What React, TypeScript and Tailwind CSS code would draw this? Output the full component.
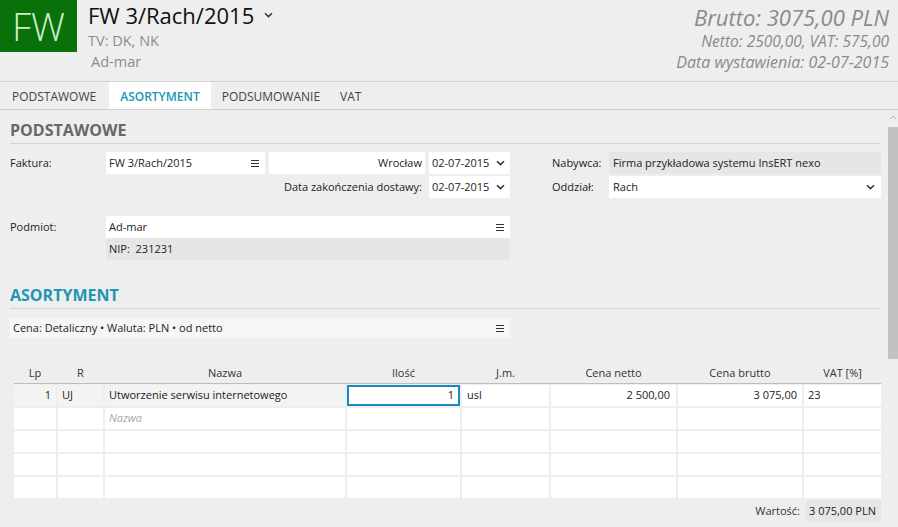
import React from "react";

const font = { fontFamily: '"Open Sans", "Noto Sans", sans-serif' };

function Chevron({ className = "" }: { className?: string }) {
  return (
    <svg width="9" height="6" viewBox="0 0 9 6" className={className}>
      <path d="M1 1.2 L4.5 4.6 L8 1.2" fill="none" stroke="currentColor" strokeWidth="1.5" />
    </svg>
  );
}

function Burger() {
  return (
    <svg width="8" height="7" viewBox="0 0 8 7">
      <path d="M0 0.5 H8 M0 3.5 H8 M0 6.5 H8" stroke="#333" strokeWidth="1" />
    </svg>
  );
}

function SectionTitle({ children, teal }: { children: React.ReactNode; teal?: boolean }) {
  return (
    <div
      className={`pt-[10px] pb-[3px] border-b border-[#d4d4d4] text-[16px] leading-[20px] font-bold ${
        teal ? "text-[#2196b4]" : "text-[#686868]"
      }`}
    >
      {children}
    </div>
  );
}

const cols = ["Lp", "R", "Nazwa", "Ilość", "J.m.", "Cena netto", "Cena brutto", "VAT [%]"];

export default function App() {
  const rows = [0, 1, 2, 3, 4];
  return (
    <div
      className="w-[898px] h-[527px] overflow-hidden bg-[#eeeeee] flex flex-col text-[#222] text-[11px]"
      style={font}
    >
      {/* header */}
      <div className="h-[82px] flex border-b border-[#d2d2d2] shrink-0">
        <div className="w-[77px] h-[52px] bg-[#0a700a] text-[#c9efc6] text-[38px] leading-[48px] flex items-center justify-center font-light">
          FW
        </div>
        <div className="ml-[11px] flex flex-col">
          <div className="flex items-center gap-[10px] text-[22px] leading-[26px] mt-[2px] text-[#111]">
            FW 3/Rach/2015
            <Chevron className="text-[#333]" />
          </div>
          <div className="text-[14.5px] leading-[20px] text-[#8c8c8c] mt-[3px]">TV: DK, NK</div>
          <div className="text-[14.5px] leading-[20px] text-[#8c8c8c] ml-[3px] mt-[1px]">Ad-mar</div>
        </div>
        <div className="ml-auto pr-[9px] flex flex-col items-end italic text-[#8a8a8a]">
          <div className="text-[22px] leading-[26px] mt-[4px]">Brutto: 3075,00 PLN</div>
          <div className="text-[15.5px] leading-[20px] mt-[1px]">Netto: 2500,00, VAT: 575,00</div>
          <div className="text-[16px] leading-[21px] mt-[1px]">Data wystawienia: 02-07-2015</div>
        </div>
      </div>

      {/* tabs */}
      <div className="h-[28px] flex items-stretch border-b border-[#d0d0d0] shrink-0 text-[12px] text-[#444]">
        <div className="px-[12px] pt-[2px] flex items-center">PODSTAWOWE</div>
        <div className="px-[11px] pt-[2px] ml-[1px] flex items-center bg-white text-[#2196b4] font-semibold">
          ASORTYMENT
        </div>
        <div className="px-[11px] pt-[2px] flex items-center">PODSUMOWANIE</div>
        <div className="px-[9px] pt-[2px] flex items-center">VAT</div>
      </div>

      {/* body */}
      <div className="flex flex-1 min-h-0">
        <div className="flex-1 pl-[10px] pr-[7px] flex flex-col">
          <SectionTitle>PODSTAWOWE</SectionTitle>

          <div className="flex mt-[8px]">
            {/* left form */}
            <div className="flex flex-col w-[500px]">
              <div className="flex h-[22px] items-center">
                <div className="w-[96px]">Faktura:</div>
                <div className="w-[159px] h-full bg-white flex items-center justify-between pl-[3px] pr-[6px]">
                  FW 3/Rach/2015
                  <Burger />
                </div>
                <div className="w-[156px] h-full bg-white ml-[4px] flex items-center justify-end pr-[3px]">
                  Wrocław
                </div>
                <div className="w-[81px] h-full bg-white ml-[4px] flex items-center justify-between pl-[3px] pr-[5px]">
                  02-07-2015
                  <Chevron className="text-[#333]" />
                </div>
              </div>
              <div className="flex h-[22px] items-center mt-[2px] justify-end">
                <div className="pr-[7px]">Data zakończenia dostawy:</div>
                <div className="w-[81px] h-full bg-white flex items-center justify-between pl-[3px] pr-[5px]">
                  02-07-2015
                  <Chevron className="text-[#333]" />
                </div>
              </div>

              <div className="flex h-[22px] items-center mt-[18px]">
                <div className="w-[96px]">Podmiot:</div>
                <div className="flex-1 h-full bg-white flex items-center justify-between pl-[3px] pr-[6px]">
                  Ad-mar
                  <Burger />
                </div>
              </div>
              <div className="flex h-[22px] items-center">
                <div className="w-[96px]" />
                <div className="flex-1 h-full bg-[#e6e6e6] flex items-center pl-[3px] whitespace-pre">
                  NIP:  231231
                </div>
              </div>
            </div>

            {/* right form */}
            <div className="flex flex-col flex-1 ml-[42px]">
              <div className="flex h-[22px] items-center">
                <div className="w-[57px]">Nabywca:</div>
                <div className="flex-1 h-full bg-[#e6e6e6] flex items-center pl-[4px]">
                  Firma przykładowa systemu InsERT nexo
                </div>
              </div>
              <div className="flex h-[22px] items-center mt-[2px]">
                <div className="w-[57px]">Oddział:</div>
                <div className="flex-1 h-full bg-white flex items-center justify-between pl-[4px] pr-[6px]">
                  Rach
                  <Chevron className="text-[#333]" />
                </div>
              </div>
            </div>
          </div>

          <div className="mt-[15px]">
            <SectionTitle teal>ASORTYMENT</SectionTitle>
          </div>

          <div className="w-[500px] h-[20px] bg-[#f6f6f6] mt-[9px] flex items-center justify-between pl-[3px] pr-[6px]">
            Cena: Detaliczny • Waluta: PLN • od netto
            <Burger />
          </div>

          {/* table */}
          <div className="ml-[4px] mt-[26px]">
            <div className="grid grid-cols-[42px_45px_240px_113px_87px_125px_124px_77px] gap-x-[2px] h-[20px] border-b border-[#bdbdbd] text-[#333]">
              {cols.map((c) => (
                <div key={c} className="flex items-center justify-center">
                  {c}
                </div>
              ))}
            </div>
            <div className="grid grid-cols-[42px_45px_240px_113px_87px_125px_124px_77px] gap-x-[2px] gap-y-[2px] auto-rows-[21px] mt-[1px]">
              {rows.map((r) =>
                r === 0 ? (
                  <React.Fragment key={r}>
                    <div className="bg-[#f3f3f3] flex items-center justify-end pr-[5px]">1</div>
                    <div className="bg-[#f3f3f3] flex items-center pl-[4px]">UJ</div>
                    <div className="bg-[#f3f3f3] flex items-center pl-[4px]">Utworzenie serwisu internetowego</div>
                    <div className="bg-white border-2 border-[#1b8ac0] flex items-center justify-end pr-[4px]">1</div>
                    <div className="bg-white flex items-center pl-[5px]">usl</div>
                    <div className="bg-white flex items-center justify-end pr-[6px]">2 500,00</div>
                    <div className="bg-white flex items-center justify-end pr-[5px]">3 075,00</div>
                    <div className="bg-white flex items-center pl-[4px]">23</div>
                  </React.Fragment>
                ) : (
                  <React.Fragment key={r}>
                    <div className="bg-white" />
                    <div className="bg-white" />
                    <div className="bg-white flex items-center pl-[4px] italic text-[#a6a6a6]">
                      {r === 1 ? "Nazwa" : ""}
                    </div>
                    <div className="bg-white" />
                    <div className="bg-white" />
                    <div className="bg-white" />
                    <div className="bg-white" />
                    <div className="bg-white" />
                  </React.Fragment>
                )
              )}
            </div>
            <div className="flex justify-end items-center mt-[2px] h-[22px]">
              <div className="pr-[6px] text-[#333]">Wartość:</div>
              <div className="w-[75px] h-full bg-[#e6e6e6] flex items-center pl-[3px]">3 075,00 PLN</div>
            </div>
          </div>
        </div>

        {/* scrollbar */}
        <div className="w-[10px] flex flex-col items-center">
          <svg width="8" height="5" viewBox="0 0 8 5" className="mt-[5px]">
            <path d="M1 4 L4 1 L7 4" fill="none" stroke="#b0b0b0" strokeWidth="1" />
          </svg>
          <div className="w-[10px] h-[232px] bg-[#c2c2c2] mt-[7px]" />
        </div>
      </div>
    </div>
  );
}
